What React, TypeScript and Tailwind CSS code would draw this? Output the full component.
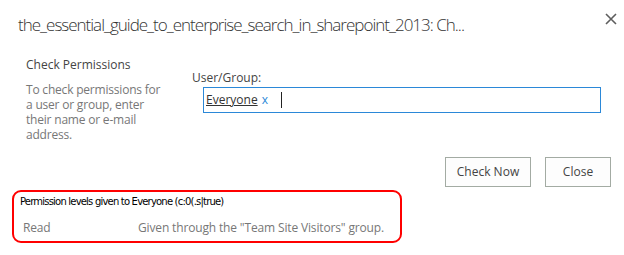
export default function App() {
  return (
    <div className="w-[624px] h-[255px] bg-white overflow-hidden font-['Open_Sans',sans-serif]">
      <div className="flex items-start justify-between pl-[18px] pr-[7px] pt-[12px]">
        <h1 className="text-[17px] leading-[26px] font-light text-[#333] whitespace-nowrap tracking-[-1px]">
          the_essential_guide_to_enterprise_search_in_sharepoint_2013: Ch...
        </h1>
        <button className="mt-[1px] w-[12px] h-[12px] flex items-center justify-center text-[#666]">
          <svg viewBox="0 0 12 12" className="w-[12px] h-[12px]">
            <path d="M1 1 L11 11 M11 1 L1 11" stroke="#5e5e5e" strokeWidth="1.6" />
          </svg>
        </button>
      </div>

      <div className="flex pt-[19px]">
        <div className="w-[192px] pl-[26px] shrink-0">
          <div className="text-[12px] leading-[16px] text-[#444]">Check Permissions</div>
          <p className="mt-[9px] text-[12px] leading-[15px] text-[#777] w-[135px] tracking-[-0.2px]">
            To check permissions for a user or group, enter their name or e-mail address.
          </p>
        </div>
        <div className="pt-[13px]">
          <div className="text-[12px] leading-[16px] text-[#444]">User/Group:</div>
          <div className="ml-[11px] mt-[1px] w-[398px] h-[26px] border border-[#2b88d8] flex items-center pl-[2px] text-[12px]">
            <span className="underline text-[#333]">Everyone</span>
            <span className="ml-[4px] text-[#2b88d8]">x</span>
            <span className="ml-[13px] w-[1px] h-[16px] bg-[#222]" />
          </div>
        </div>
      </div>

      <div className="flex justify-end gap-[14px] pr-[13px] pt-[15px]">
        <button className="w-[86px] h-[30px] border border-[#a3aba3] bg-[#fdfdfd] text-[12px] text-[#444]">
          Check Now
        </button>
        <button className="w-[66px] h-[30px] border border-[#a3aba3] bg-[#fdfdfd] text-[12px] text-[#444]">
          Close
        </button>
      </div>

      <div className="ml-[12px] mt-[3px] w-[390px] h-[53px] border-2 border-[#ff0000] rounded-[9px] pl-[6px] pt-[3px]">
        <div className="text-[10px] leading-[14px] text-black font-['DejaVu_Sans',sans-serif] tracking-[-0.8px]">
          Permission levels given to Everyone (c:0(.s|true)
        </div>
        <div className="flex mt-[11px] text-[12px] leading-[16px] text-[#777] tracking-[-0.15px]">
          <span className="w-[118px] pl-[3px]">Read</span>
          <span>Given through the "Team Site Visitors" group.</span>
        </div>
      </div>
    </div>
  );
}
